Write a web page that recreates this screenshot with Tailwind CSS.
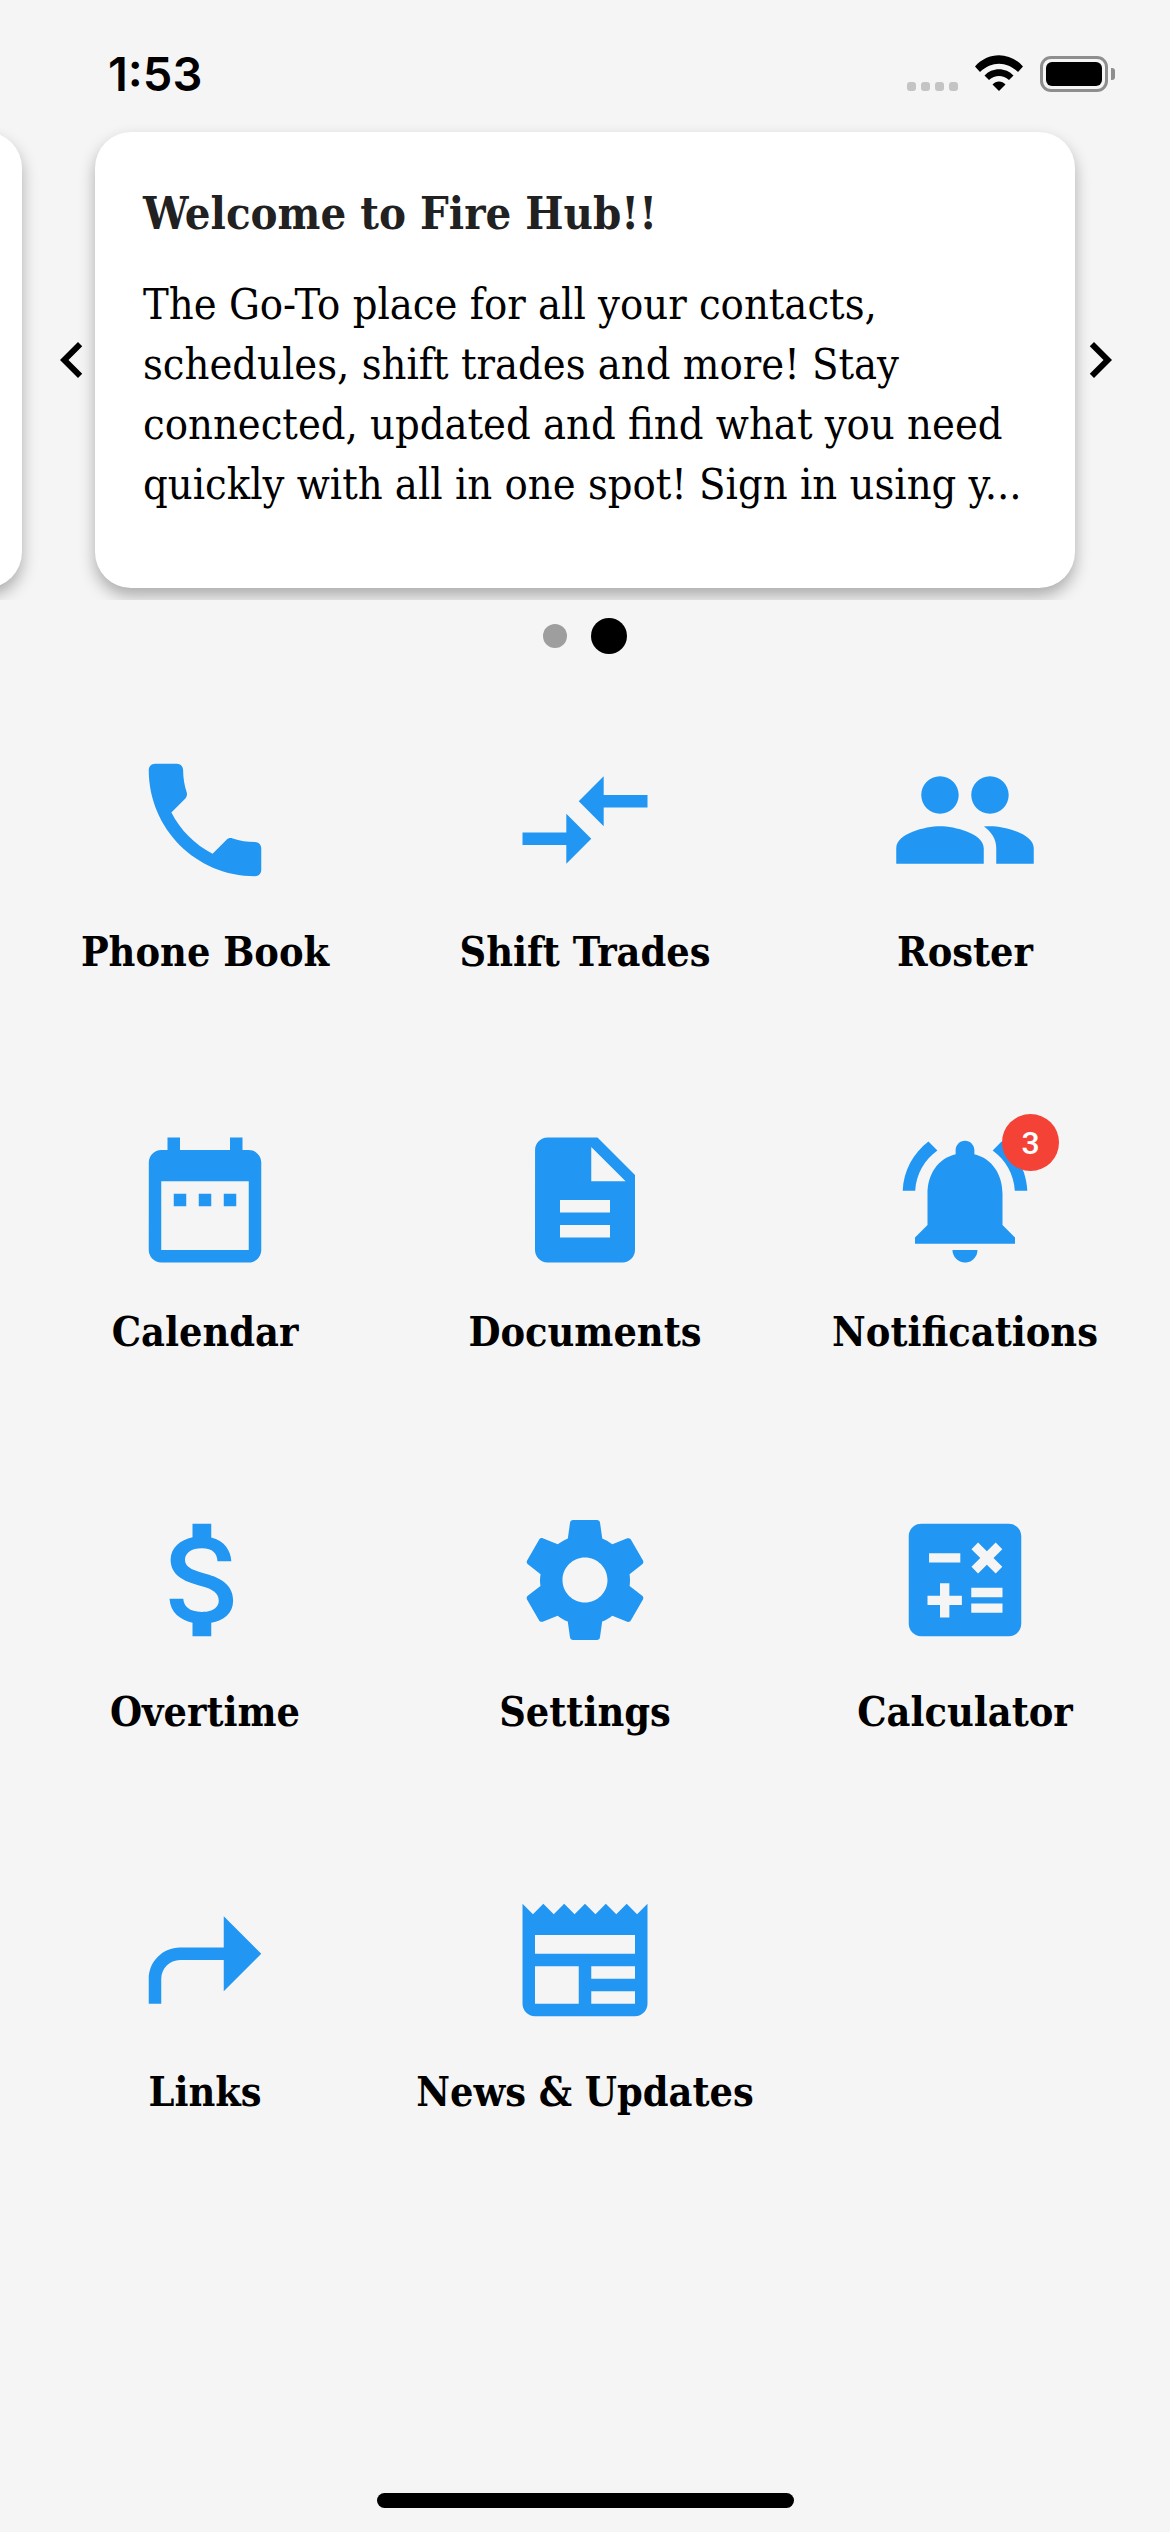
<!doctype html>
<html lang="en">
<head>
  <meta charset="UTF-8" />
  <meta name="viewport" content="width=device-width, initial-scale=1.0" />
  <title>Fire Hub</title>
  <script src="https://cdn.jsdelivr.net/npm/@tailwindcss/browser@4"></script>
</head>
<body class="bg-[#f5f5f5]">
  <div class="relative flex h-[2532px] w-[1170px] flex-col overflow-hidden bg-[#f5f5f5] font-['DejaVu_Serif_Condensed',serif] text-black">

    <!-- Status bar + carousel -->
    <div class="relative h-[600px] overflow-hidden">
      <div class="flex h-[132px] items-start justify-between pl-[108px] pr-[55px]">
        <span class="mt-[46px] font-['Inter',sans-serif] text-[47px] leading-[56px] font-semibold">1:53</span>
        <div class="mt-[55px] flex items-start">
          <div class="mt-[27px] flex gap-[5px]">
            <span class="h-[9px] w-[9px] rounded-[3px] bg-[#c4c4c4]"></span>
            <span class="h-[9px] w-[9px] rounded-[3px] bg-[#c4c4c4]"></span>
            <span class="h-[9px] w-[9px] rounded-[3px] bg-[#c4c4c4]"></span>
            <span class="h-[9px] w-[9px] rounded-[3px] bg-[#c4c4c4]"></span>
          </div>
          <svg class="ml-[17px] h-[36px] w-[48px] fill-black" viewBox="0 0 48 36">
            <path d="M0 11.5C13-3.5 35-3.5 48 11.5L43 17C31.5 6 16.5 6 5 17Z" />
            <path d="M9.5 20.5C17 12 31 12 38.5 20.5L34 25C28 19.5 20 19.5 14 25Z" />
            <path d="M17.5 29.5C21 25.5 27 25.5 30.5 29.5L24 36Z" />
          </svg>
          <div class="ml-[17px] mt-[1px] flex h-[36px] w-[68px] items-center justify-center rounded-[11px] border-[3px] border-[#8e8e8e]">
            <div class="h-[24px] w-[56px] rounded-[6px] bg-black"></div>
          </div>
          <div class="ml-[3px] mt-[13px] h-[12px] w-[4px] rounded-r-[3px] bg-[#8e8e8e]"></div>
        </div>
      </div>

      <div class="ml-[-958px] flex gap-[73px]">
        <div class="h-[456px] w-[980px] shrink-0 rounded-[36px] bg-white shadow-[0_8px_16px_rgba(0,0,0,0.3)]"></div>
        <div class="h-[456px] w-[980px] shrink-0 rounded-[36px] bg-white pl-[48px] pt-[52px] shadow-[0_8px_16px_rgba(0,0,0,0.3)]">
          <h2 class="text-[45px] leading-[60px] font-bold text-[#212121]">Welcome to Fire Hub!!</h2>
          <p class="mt-[30px] text-[43px] leading-[60px] whitespace-nowrap">The Go-To place for all your contacts,<br />schedules, shift trades and more! Stay<br />connected, updated and find what you need<br />quickly with all in one spot! Sign in using y...</p>
        </div>
      </div>

      <svg class="absolute left-[36px] top-[324px] h-[72px] w-[72px] fill-black" viewBox="0 0 24 24"><path d="M15.41 7.41L14 6l-6 6 6 6 1.41-1.41L10.83 12z" /></svg>
      <svg class="absolute left-[1064px] top-[324px] h-[72px] w-[72px] fill-black" viewBox="0 0 24 24"><path d="M10 6L8.59 7.41 13.17 12l-4.58 4.59L10 18l6-6z" /></svg>
    </div>

    <!-- Page dots -->
    <div class="mt-[18px] flex items-center justify-center gap-[24px]">
      <span class="h-[24px] w-[24px] rounded-full bg-[#9e9e9e]"></span>
      <span class="h-[36px] w-[36px] rounded-full bg-black"></span>
    </div>

    <!-- Menu grid -->
    <div class="mt-[51px] grid grid-cols-3 auto-rows-[380px] px-[15px] text-center text-[41px] leading-[60px] font-bold">
      <div class="flex flex-col items-center pt-[40px]">
        <svg class="h-[150px] w-[150px] fill-[#2196f3]" viewBox="0 0 24 24"><path d="M6.62 10.79c1.44 2.83 3.76 5.14 6.59 6.59l2.2-2.2c.27-.27.67-.36 1.02-.24 1.12.37 2.33.57 3.57.57.55 0 1 .45 1 1V20c0 .55-.45 1-1 1-9.39 0-17-7.61-17-17 0-.55.45-1 1-1h3.5c.55 0 1 .45 1 1 0 1.25.2 2.45.57 3.57.11.35.03.74-.25 1.02l-2.2 2.2z" /></svg>
        <span class="mt-[27px]">Phone Book</span>
      </div>
      <div class="flex flex-col items-center pt-[40px]">
        <svg class="h-[150px] w-[150px] fill-[#2196f3]" viewBox="0 0 24 24"><path d="M9.01 14H2v2h7.01v3L13 15l-3.99-4v3zm5.98-1v-3H22V8h-7.01V5L11 9l3.99 4z" /></svg>
        <span class="mt-[27px]">Shift Trades</span>
      </div>
      <div class="flex flex-col items-center pt-[40px]">
        <svg class="h-[150px] w-[150px] fill-[#2196f3]" viewBox="0 0 24 24"><path d="M16 11c1.66 0 2.99-1.34 2.99-3S17.66 5 16 5c-1.66 0-3 1.34-3 3s1.34 3 3 3zm-8 0c1.66 0 2.99-1.34 2.99-3S9.66 5 8 5C6.34 5 5 6.34 5 8s1.34 3 3 3zm0 2c-2.33 0-7 1.17-7 3.5V19h14v-2.5c0-2.33-4.67-3.5-7-3.5zm8 0c-.29 0-.62.02-.97.05 1.16.84 1.97 1.97 1.97 3.45V19h6v-2.5c0-2.33-4.67-3.5-7-3.5z" /></svg>
        <span class="mt-[27px]">Roster</span>
      </div>

      <div class="flex flex-col items-center pt-[40px]">
        <svg class="h-[150px] w-[150px] fill-[#2196f3]" viewBox="0 0 24 24"><path d="M9 11H7v2h2v-2zm4 0h-2v2h2v-2zm4 0h-2v2h2v-2zm2-7h-1V2h-2v2H8V2H6v2H5c-1.11 0-1.99.9-1.99 2L3 20c0 1.1.89 2 2 2h14c1.1 0 2-.9 2-2V6c0-1.1-.9-2-2-2zm0 16H5V9h14v11z" /></svg>
        <span class="mt-[27px]">Calendar</span>
      </div>
      <div class="flex flex-col items-center pt-[40px]">
        <svg class="h-[150px] w-[150px] fill-[#2196f3]" viewBox="0 0 24 24"><path d="M14 2H6c-1.1 0-1.99.9-1.99 2L4 20c0 1.1.89 2 1.99 2H18c1.1 0 2-.9 2-2V8l-6-6zm2 16H8v-2h8v2zm0-4H8v-2h8v2zm-3-5V3.5L18.5 9H13z" /></svg>
        <span class="mt-[27px]">Documents</span>
      </div>
      <div class="flex flex-col items-center pt-[40px]">
        <div class="relative h-[150px] w-[150px]">
          <svg class="h-[150px] w-[150px] fill-[#2196f3]" viewBox="0 0 24 24"><path d="M7.58 4.08L6.15 2.65C3.75 4.48 2.17 7.3 2.03 10.5h2c.15-2.65 1.51-4.97 3.55-6.42zm12.39 6.42h2c-.15-3.2-1.73-6.02-4.12-7.85l-1.42 1.43c2.02 1.45 3.39 3.77 3.54 6.42zM18 11c0-3.07-1.64-5.64-4.5-6.32V4c0-.83-.67-1.5-1.5-1.5s-1.5.67-1.5 1.5v.68C7.63 5.36 6 7.92 6 11v5l-2 2v1h16v-1l-2-2v-5zm-6 11c.14 0 .27-.01.4-.04.65-.14 1.18-.58 1.44-1.18.1-.24.15-.5.15-.78h-4c.01 1.1.9 2 2.01 2z" /></svg>
          <span class="absolute left-[112px] top-[-11px] flex h-[57px] w-[57px] items-center justify-center rounded-full bg-[#f44336] font-['Roboto',sans-serif] text-[32px] leading-none font-medium text-white">3</span>
        </div>
        <span class="mt-[27px]">Notifications</span>
      </div>

      <div class="flex flex-col items-center pt-[40px]">
        <svg class="h-[150px] w-[150px] fill-[#2196f3]" viewBox="0 0 24 24"><path d="M11.8 10.9c-2.27-.59-3-1.2-3-2.15 0-1.09 1.01-1.85 2.7-1.85 1.78 0 2.44.85 2.5 2.1h2.21c-.07-1.72-1.12-3.3-3.21-3.81V3h-3v2.16c-1.94.42-3.5 1.68-3.5 3.61 0 2.31 1.91 3.46 4.7 4.13 2.5.6 3 1.48 3 2.41 0 .69-.49 1.79-2.7 1.79-2.06 0-2.87-.92-2.98-2.1h-2.2c.12 2.19 1.76 3.42 3.68 3.83V21h3v-2.15c1.95-.37 3.5-1.5 3.5-3.55 0-2.84-2.43-3.81-4.7-4.4z" /></svg>
        <span class="mt-[27px]">Overtime</span>
      </div>
      <div class="flex flex-col items-center pt-[40px]">
        <svg class="h-[150px] w-[150px] fill-[#2196f3]" viewBox="0 0 24 24"><path d="M19.14 12.94c.04-.3.06-.61.06-.94 0-.32-.02-.64-.07-.94l2.03-1.58c.18-.14.23-.41.12-.61l-1.92-3.32c-.12-.22-.37-.29-.59-.22l-2.39.96c-.5-.38-1.03-.7-1.62-.94l-.36-2.54c-.04-.24-.24-.41-.48-.41h-3.84c-.24 0-.43.17-.47.41l-.36 2.54c-.59.24-1.13.57-1.62.94l-2.39-.96c-.22-.08-.47 0-.59.22L2.74 8.87c-.12.21-.08.47.12.61l2.03 1.58c-.05.3-.09.63-.09.94s.02.64.07.94l-2.03 1.58c-.18.14-.23.41-.12.61l1.92 3.32c.12.22.37.29.59.22l2.39-.96c.5.38 1.03.7 1.62.94l.36 2.54c.05.24.24.41.48.41h3.84c.24 0 .44-.17.47-.41l.36-2.54c.59-.24 1.13-.56 1.62-.94l2.39.96c.22.08.47 0 .59-.22l1.92-3.32c.12-.22.07-.47-.12-.61l-2.01-1.58zM12 15.6c-1.98 0-3.6-1.62-3.6-3.6s1.62-3.6 3.6-3.6 3.6 1.62 3.6 3.6-1.62 3.6-3.6 3.6z" /></svg>
        <span class="mt-[27px]">Settings</span>
      </div>
      <div class="flex flex-col items-center pt-[40px]">
        <svg class="h-[150px] w-[150px] fill-[#2196f3]" viewBox="0 0 24 24"><path fill-rule="evenodd" d="M19 3H5c-1.1 0-2 .9-2 2v14c0 1.1.9 2 2 2h14c1.1 0 2-.9 2-2V5c0-1.1-.9-2-2-2zm-5.97 4.06L14.09 6l1.41 1.41L16.91 6l1.06 1.06-1.41 1.41 1.41 1.41-1.06 1.06-1.41-1.4-1.41 1.41-1.06-1.06 1.41-1.41-1.41-1.42zM6.25 7.72h5v1.5h-5v-1.5zM11.5 16h-2v2H8v-2H6v-1.5h2v-2h1.5v2h2V16zm6.5 1.25h-5v-1.5h5v1.5zm0-2.5h-5v-1.5h5v1.5z" /></svg>
        <span class="mt-[27px]">Calculator</span>
      </div>

      <div class="flex flex-col items-center pt-[40px]">
        <svg class="h-[150px] w-[150px] fill-[#2196f3]" viewBox="0 0 24 24"><path d="M21 11l-6-6v5H8c-2.76 0-5 2.24-5 5v4h2v-4c0-1.65 1.35-3 3-3h7v5l6-6z" /></svg>
        <span class="mt-[27px]">Links</span>
      </div>
      <div class="flex flex-col items-center pt-[40px]">
        <svg class="h-[150px] w-[150px] fill-[#2196f3]" viewBox="0 0 24 24"><path d="M22 3l-1.67 1.67L18.67 3 17 4.67 15.33 3l-1.66 1.67L12 3l-1.67 1.67L8.67 3 7 4.67 5.33 3 3.67 4.67 2 3v16c0 1.1.9 2 2 2h16c1.1 0 2-.9 2-2V3zM11 19H4v-6h7v6zm9 0h-7v-2h7v2zm0-4h-7v-2h7v2zm0-4H4V8h16v3z" /></svg>
        <span class="mt-[27px]">News &amp; Updates</span>
      </div>
    </div>

    <!-- Home indicator -->
    <div class="absolute bottom-[24px] left-[377px] h-[15px] w-[417px] rounded-full bg-black"></div>
  </div>
</body>
</html>
